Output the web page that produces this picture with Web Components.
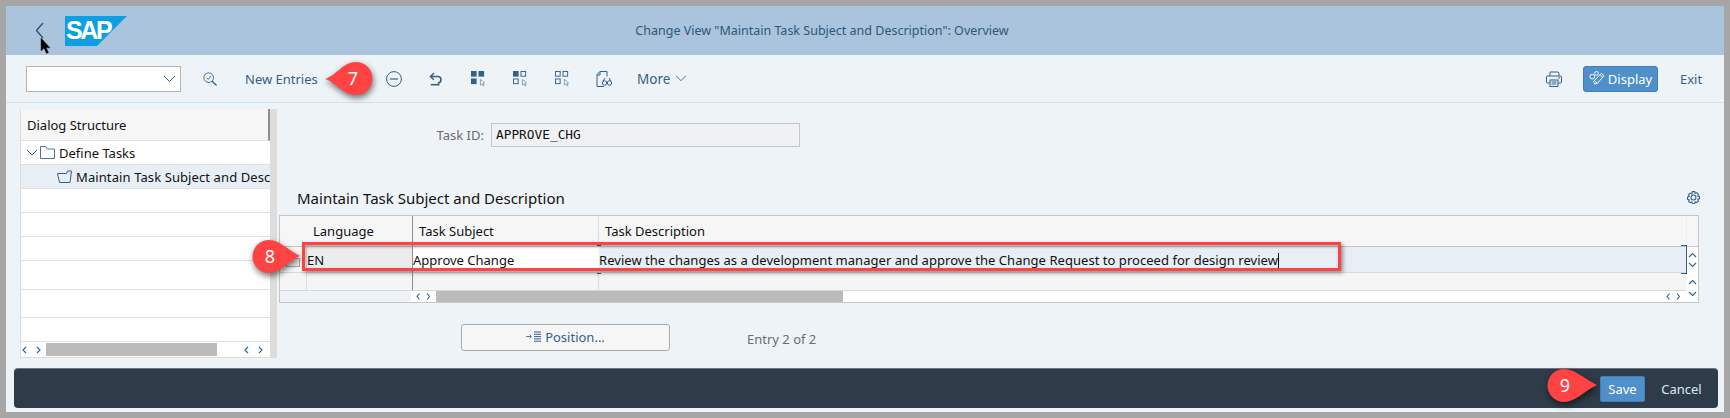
<!DOCTYPE html>
<html>
<head>
<meta charset="utf-8">
<title>Change View</title>
<style>
  html, body { margin: 0; padding: 0; background: #a6a6a6; }
  body { font-family: "Noto Sans", "Liberation Sans", sans-serif; font-size: 13px; }
</style>
</head>
<body>
<sap-shell>
  <sap-header slot="header" heading='Change View "Maintain Task Subject and Description": Overview'></sap-header>
  <sap-toolbar slot="toolbar"></sap-toolbar>
  <sap-tree slot="tree"></sap-tree>
  <sap-detail slot="detail"></sap-detail>
  <sap-footer slot="footer"></sap-footer>
  <red-frame slot="over" style="left:302px;top:242px;width:1039px;height:29px"></red-frame>
  <call-out slot="over" num="7" style="left:325px;top:61px;width:48px;height:35px"></call-out>
  <call-out slot="over" num="8" style="left:252px;top:239px;width:49px;height:35px"></call-out>
  <call-out slot="over" num="9" style="left:1547px;top:368px;width:51px;height:35px"></call-out>
</sap-shell>

<script>
const BLUE = "#346187";

// svg icons used in the toolbar, all drawn on a 16 box
const cursor = `<path d="M10 9v6l1.5-1.4L13 16l1-.6-1.4-2.3 1.9-.3z" fill="#fff" stroke="#6b86a0" stroke-width=".8"/>`;
const ICONS = {
  search: `<circle cx="6.5" cy="6.5" r="5.5" fill="none" stroke="${BLUE}" stroke-width="1"/><path d="M10.500 10.500L15.500 15.500" stroke="${BLUE}" stroke-width="1.6"/><path d="M4 6.500l2 2 3-4" fill="none" stroke="${BLUE}" stroke-width="1"/>`,
  minus: `<circle cx="8" cy="8" r="7.400" fill="none" stroke="${BLUE}" stroke-width="1"/><path d="M4 8h8" stroke="${BLUE}" stroke-width="1.2"/>`,
  undo: `<path d="M5.500 1.500L1.800 5.200l3.700 3.600" fill="none" stroke="${BLUE}" stroke-width="1.8"/><path d="M2 5.200h8a3.700 3.700 0 0 1 0 7.400" fill="none" stroke="${BLUE}" stroke-width="1.8"/><path d="M2 14.500h10" stroke="${BLUE}" stroke-width="1.8"/>`,
  selall: `<rect x="0" y="0" width="6" height="6" fill="${BLUE}"/><rect x="8" y="0" width="6" height="6" fill="${BLUE}"/><rect x="0" y="8" width="6" height="6" fill="${BLUE}"/>${cursor}`,
  selblk: `<rect x="0" y="0" width="6" height="6" fill="${BLUE}"/><rect x="8.500" y=".5" width="5" height="5" fill="none" stroke="${BLUE}"/><rect x=".5" y="8.500" width="5" height="5" fill="none" stroke="${BLUE}"/>${cursor}`,
  selnone: `<rect x=".5" y=".5" width="5" height="5" fill="none" stroke="${BLUE}"/><rect x="8.500" y=".5" width="5" height="5" fill="none" stroke="${BLUE}"/><rect x=".5" y="8.500" width="5" height="5" fill="none" stroke="${BLUE}"/>${cursor}`,
  docview: `<path d="M4 .5h7v5M4 .5L1 3.500v12h7" fill="none" stroke="${BLUE}"/><path d="M1 4h3V.5" fill="none" stroke="${BLUE}"/><circle cx="8.500" cy="12" r="2.200" fill="none" stroke="${BLUE}"/><circle cx="13.500" cy="12" r="2.200" fill="none" stroke="${BLUE}"/><path d="M10.700 11.500h.6M7 10l2-3M15 10l-2-3" fill="none" stroke="${BLUE}"/>`,
  print: `<path d="M4 5V1h8l1 1v3" fill="none" stroke="${BLUE}"/><rect x=".5" y="5" width="15" height="7" rx="1" fill="none" stroke="${BLUE}"/><rect x="4" y="9" width="8" height="6.500" fill="#eef3f8" stroke="${BLUE}"/><path d="M5.500 11h5M5.500 13h5M12 7h2" stroke="${BLUE}"/>`,
  display: `<path d="M5 11l1 3 3-1 7-8-3-2.500z" fill="none" stroke="#fff"/><path d="M9 13L6 10.500M12 4.500l3 2.500" stroke="#fff"/><circle cx="3.500" cy="6" r="2.500" fill="none" stroke="#fff"/><circle cx="8" cy="2.500" r="2" fill="none" stroke="#fff"/>`,
  chevron: `<path d="M1 1l5.500 5.500L12 1" fill="none" stroke="${BLUE}" stroke-width="1"/>`
};

function svg(name, w, h, box) {
  return `<svg width="${w}" height="${h}" viewBox="${box || "0 0 16 16"}" style="display:block;overflow:visible">${ICONS[name]}</svg>`;
}

function shadow(el, html) {
  el.attachShadow({ mode: "open" }).innerHTML = html;
}

class SapShell extends HTMLElement {
  constructor() {
    super();
    shadow(this, `<style>
      :host { display: block; position: relative; width: 1730px; height: 418px; box-sizing: border-box; padding: 6px; background: #a6a6a6; overflow: hidden; }
      .page { display: flex; flex-direction: column; height: 406px; width: 1718px; background: #eef3f8; }
      .main { display: flex; flex: 1; min-height: 0; padding-left: 14px; }
    </style>
    <div class="page">
      <slot name="header"></slot>
      <slot name="toolbar"></slot>
      <div class="main"><slot name="tree"></slot><slot name="detail"></slot></div>
      <slot name="footer"></slot>
    </div>
    <slot name="over"></slot>`);
  }
}

class SapHeader extends HTMLElement {
  constructor() {
    super();
    shadow(this, `<style>
      :host { display: flex; align-items: center; height: 49px; background: #a9c4dc; flex: none; position: relative; }
      .back { margin-left: 29px; width: 30px; flex: none; }
      .logo { position: relative; width: 62px; height: 30px; flex: none; }
      .logo svg { position: absolute; inset: 0; }
      .logo span { position: relative; display: block; padding-left: 1px; font: bold 25px/29px "Liberation Sans", sans-serif; color: #fff; letter-spacing: -2.4px; }
      h1 { flex: 1; margin: 0; padding-right: 207px; text-align: center; font-size: 12.5px; font-weight: 400; color: #2f5878; }
      .ptr { position: absolute; left: 34px; top: 32px; }
    </style>
    <div class="back"><svg width="9" height="17" viewBox="0 0 9 17" style="display:block"><path d="M8 1L1.500 8.500 8 16" fill="none" stroke="#2d5577" stroke-width="1.4"/></svg></div>
    <div class="logo"><svg width="62" height="30" viewBox="0 0 62 30"><path d="M0 0h62L32 30H0z" fill="#0d9fe2"/></svg><span>SAP</span></div>
    <h1>${this.getAttribute("heading")}</h1>
    <svg class="ptr" width="11" height="16" viewBox="0 0 11 16"><path d="M1 0v13l3-2.800L6.500 15.500 8.500 14.500 6.200 9.800H10z" fill="#000" stroke="#333" stroke-width=".5"/></svg>`);
  }
}

class SapToolbar extends HTMLElement {
  constructor() {
    super();
    shadow(this, `<style>
      :host { display: flex; align-items: center; height: 47px; flex: none; box-sizing: content-box; border-bottom: 1px solid #d3e2f1; background: #eef3f8; color: ${BLUE}; font-size: 13px; }
      .sel { margin-left: 20px; width: 155px; height: 26px; background: #fff; border: 1px solid #b5b5b5; display: flex; align-items: center; justify-content: flex-end; padding-right: 4px; box-sizing: border-box; flex: none; }
      .ic { flex: none; display: block; }
      .text { flex: none; }
      .spacer { flex: 1; }
      .btn { flex: none; display: flex; align-items: center; gap: 4px; box-sizing: border-box; width: 75px; height: 26px; justify-content: center; background: #4f8fca; border: 1px solid #3e7fbb; border-radius: 3px; color: #fff; }
    </style>
    <div class="sel">${svg("chevron", 13, 8, "0 0 13 8")}</div>
    <div class="ic" style="margin-left:22px">${svg("search", 14, 14)}</div>
    <div class="text" style="margin-left:28px;width:73px">New Entries</div>
    <div class="ic" style="margin-left:68px">${svg("minus", 16, 16)}</div>
    <div class="ic" style="margin-left:27px">${svg("undo", 14, 14)}</div>
    <div class="ic" style="margin-left:28px">${svg("selall", 15, 15)}</div>
    <div class="ic" style="margin-left:27px">${svg("selblk", 15, 15)}</div>
    <div class="ic" style="margin-left:27px">${svg("selnone", 15, 15)}</div>
    <div class="ic" style="margin-left:26px">${svg("docview", 16, 16)}</div>
    <div class="text" style="margin-left:25px;font-size:13.500px;width:33px">More</div>
    <div class="ic" style="margin-left:5px">${svg("chevron", 12, 7, "0 0 13 8")}</div>
    <div class="spacer"></div>
    <div class="ic">${svg("print", 16, 16)}</div>
    <div class="btn" style="margin-left:21px">${svg("display", 15, 15)}<span>Display</span></div>
    <div class="text" style="margin-left:22px;margin-right:23px;width:21px">Exit</div>`);
  }
}

class SapTree extends HTMLElement {
  constructor() {
    super();
    const arrows = `<svg width="22" height="8" viewBox="0 0 22 8"><path d="M5 1L2 4l3 3M16 1l3 3-3 3" fill="none" stroke="#2a6bb0" stroke-width="1.2"/></svg>`;
    shadow(this, `<style>
      :host { display: block; flex: none; width: 257px; height: 249px; margin-top: 6px; box-sizing: border-box; background: #ddd; padding-right: 7px; color: #111; }
      .box { height: 100%; background: #fff; border-left: 1px solid #ddd; box-sizing: border-box; display: flex; flex-direction: column; overflow: hidden; }
      .head { height: 32px; flex: none; background: #f6f6f6; border-bottom: 1px solid #e0e0e0; border-right: 2px solid #8f8f8f; box-sizing: border-box; padding-left: 6px; line-height: 32px; }
      .row { flex: none; height: 24px; box-sizing: border-box; border-bottom: 1px solid #e0e0e0; display: flex; align-items: center; white-space: nowrap; overflow: hidden; }
      .row.sel { background: #e8eef6; }
      .foot { margin-top: auto; height: 15px; flex: none; display: flex; align-items: center; border-bottom: 1px solid #ddd; box-sizing: content-box; }
      .thumb { width: 171px; height: 13px; background: #bbb; margin-left: 3px; }
      .foot svg { flex: none; display: block; }
      .end { margin-left: auto; margin-right: 5px; }
    </style>
    <div class="box">
      <div class="head">Dialog Structure</div>
      <div class="row">
        <svg style="margin-left:5px;flex:none" width="12" height="7" viewBox="0 0 12 7"><path d="M1 1l5 5 5-5" fill="none" stroke="${BLUE}"/></svg>
        <svg style="margin-left:2px;flex:none" width="15" height="13" viewBox="0 0 15 13"><path d="M.5 12.500V.5h5l2 2.500h7v9.500z" fill="none" stroke="#5b6f9c"/></svg>
        <span style="margin-left:4px">Define Tasks</span>
      </div>
      <div class="row sel">
        <svg style="margin-left:36px;flex:none" width="15" height="13" viewBox="0 0 15 13"><path d="M.5 3.500h9l1-2.500h4l-1.500 11.500H2.500z" fill="none" stroke="${BLUE}"/></svg>
        <span style="margin-left:4px;letter-spacing:.1px">Maintain Task Subject and Desc</span>
      </div>
      <div class="row"></div>
      <div class="row"></div>
      <div class="row"></div>
      <div class="row" style="height:29px"></div>
      <div class="row" style="height:28px"></div>
      <div class="row"></div>
      <div class="foot">
        ${arrows}
        <div class="thumb"></div>
        <div class="end">${arrows}</div>
      </div>
    </div>`);
  }
}

class SapDetail extends HTMLElement {
  constructor() {
    super();
    const up = `<path d="M1 5l3.500-3.500L8 5" fill="none" stroke="${BLUE}" stroke-width="1.2"/>`;
    const dn = `<path d="M1 1l3.500 3.500L8 1" fill="none" stroke="${BLUE}" stroke-width="1.2"/>`;
    const lr = `<svg width="15" height="7" viewBox="0 0 15 7"><path d="M3.500 .5L1 3.500l2.500 3M11 .5l2.500 3-2.500 3" fill="none" stroke="${BLUE}" stroke-width="1.100"/></svg>`;
    shadow(this, `<style>
      :host { display: flex; flex-direction: column; flex: none; width: 1420px; margin-left: 2px; color: #111; }
      .id { display: flex; align-items: center; margin-top: 20px; height: 24px; }
      .id label { width: 205px; text-align: right; color: #6a6d70; }
      .field { margin-left: 7px; width: 309px; height: 24px; box-sizing: border-box; background: #f0f1f3; border: 1px solid #c6c6c6; padding-left: 4px; font: 12.800px/22px "DejaVu Sans Mono", monospace; color: #111; }
      .title { display: flex; align-items: center; justify-content: space-between; margin-top: 37px; height: 31px; padding: 0 0 4px 18px; box-sizing: border-box; font-size: 15px; }
      .title svg { display: block; margin-right: -1px; }
      .tbl { display: grid; grid-template-columns: 27px 106px 186px 1fr 12px; grid-template-rows: 31px 26px 18px 11px; height: 88px; box-sizing: border-box; border: 1px solid #c6c6c6; }
      .tbl > div { box-sizing: border-box; }
      .hd { background: #f6f6f6; border-bottom: 1px solid #c6c6c6; padding: 0 6px; line-height: 30px; }
      .dark { border-right: 1px solid #8e8e8e; }
      .lite { border-right: 1px solid #ddd; }
      .cell { line-height: 26px; white-space: nowrap; border-bottom: 1px solid #d9d9d9; position: relative; }
      .lang { background: #ececec; }
      .subj { background: #fff; }
      .desc { background: #e8eef6; letter-spacing: .04px; }
      .caret { display: inline-block; width: 1px; height: 15px; background: #000; vertical-align: -3px; }
      .mark::after { content: ""; position: absolute; right: -1px; top: -2px; bottom: -2px; width: 5px; border: 1px solid ${BLUE}; border-left: 0; }
      .subj.mark::after { border-width: 1px 0; right: -2px; width: 4px; }
      .rowsel { background: #f6f6f6; border-bottom: 1px solid #d9d9d9; padding: 11px 0 0 6px; }
      .rowsel i { display: block; width: 14px; height: 9px; box-sizing: border-box; border: 1px solid #aaa; background: #eee; }
      .emp { background: #f6f5f6; border-bottom: 1px solid #d9d9d9; }
      .v { background: #fff; display: flex; flex-direction: column; align-items: center; justify-content: center; gap: 4px; }
      .v svg { display: block; }
      .vlow { grid-column: 5; grid-row: 3 / span 2; gap: 6px; }
      .scroll { grid-column: 1 / span 4; grid-row: 4; display: flex; align-items: stretch; height: 11px; background: #fff; }
      .blank { width: 131px; background: #eef3f8; flex: none; }
      .ar { width: 25px; display: flex; align-items: center; justify-content: center; flex: none; }
      .thumb { width: 407px; background: #bbb; flex: none; }
      .endar { margin-left: auto; }
      .pos { display: flex; align-items: center; margin-top: 21px; }
      button { margin-left: 182px; width: 209px; height: 27px; display: flex; align-items: center; justify-content: center; gap: 3px; background: #f6f6f6; border: 1px solid #aaa; border-radius: 3px; font: inherit; font-size: 13px; color: ${BLUE}; padding: 0 0 2px; }
      .entry { margin-left: 77px; margin-top: 3px; color: #6a6d70; }
    </style>
    <div class="id"><label>Task ID:</label><div class="field">APPROVE_CHG</div></div>
    <div class="title"><span>Maintain Task Subject and Description</span>
      <svg width="13" height="13" viewBox="0 0 16 16"><circle cx="8" cy="8" r="3" fill="none" stroke="${BLUE}" stroke-width="1.300"/><path d="M6.500.8h3l.5 2.200 2-1 2.200 2.200-1 2 2.200.5v3l-2.200.5 1 2-2.200 2.200-2-1-.5 2.200h-3l-.5-2.200-2 1L1.800 12.800l1-2L.6 10.300v-3l2.200-.5-1-2L4 2.600l2 1z" fill="none" stroke="${BLUE}" stroke-width="1.300"/></svg>
    </div>
    <div class="tbl">
      <div class="hd"></div>
      <div class="hd dark">Language</div>
      <div class="hd lite">Task Subject</div>
      <div class="hd">Task Description</div>
      <div class="hd" style="padding:0;border-left:1px solid #e6edf5"></div>

      <div class="rowsel lite"><i></i></div>
      <div class="cell lang dark">EN</div>
      <div class="cell subj mark">Approve Change</div>
      <div class="cell desc mark">Review the changes as a development manager and approve the Change Request to proceed for design review<span class="caret"></span></div>
      <div class="v"><svg width="9" height="6" viewBox="0 0 9 6">${up}</svg><svg width="9" height="6" viewBox="0 0 9 6">${dn}</svg></div>

      <div class="emp lite"></div>
      <div class="emp dark"></div>
      <div class="emp lite"></div>
      <div class="emp"></div>
      <div class="v vlow"><svg width="9" height="6" viewBox="0 0 9 6">${up}</svg><svg width="9" height="6" viewBox="0 0 9 6">${dn}</svg></div>

      <div class="scroll">
        <div class="blank"></div>
        <div class="ar">${lr}</div>
        <div class="thumb"></div>
        <div class="ar endar">${lr}</div>
      </div>
    </div>
    <div class="pos">
      <button><svg width="16" height="11" viewBox="0 0 16 11"><path d="M0 5.500h5M3.500 3.500l2 2-2 2" fill="none" stroke="#6a7a88"/><path d="M8 1h7M8 3.300h7M8 5.600h7M8 7.900h7M8 10.200h7" stroke="${BLUE}"/></svg><span>Position...</span></button>
      <div class="entry">Entry 2 of 2</div>
    </div>`);
  }
}

class SapFooter extends HTMLElement {
  constructor() {
    super();
    shadow(this, `<style>
      :host { display: flex; align-items: center; justify-content: flex-end; flex: none; box-sizing: border-box; height: 40px; margin: 0 6px 4px 8px; background: #2f3b48; border-top: 1px solid #6d7782; border-radius: 4px; font-size: 13px; color: #fff; }
      .save { width: 45px; height: 26px; line-height: 24px; text-align: center; box-sizing: border-box; background: #4f8fca; border: 1px solid #3e7fbb; border-radius: 2px; }
      .cancel { margin: 0 15px; width: 43px; text-align: center; color: #d8eaf8; }
    </style>
    <div class="save">Save</div><div class="cancel">Cancel</div>`);
  }
}

// red annotation frame laid over the screenshot
class RedFrame extends HTMLElement {
  constructor() {
    super();
    shadow(this, `<style>
      :host { display: block; position: absolute; box-sizing: border-box; border: 3px solid #ff4343; box-shadow: 2px 2px 4px rgba(0,0,0,.4), inset 1px 2px 3px rgba(0,0,0,.3); }
    </style>`);
  }
}

// numbered drop shaped marker pointing at a control
class CallOut extends HTMLElement {
  constructor() {
    super();
    const n = this.getAttribute("num");
    const flip = n == 7;
    const shape = flip
      ? `<svg width="48" height="35"><path d="M0 18C12 14 18 1 31 1a16.500 16.500 0 0 1 0 33C18 34 12 22 0 18z" fill="#ff4343"/></svg>`
      : `<svg width="${n == 8 ? 49 : 51}" height="35"><path d="M${n == 8 ? 48 : 50} 17C${n == 8 ? 34 : 36} 10 28 1 17 1a16.500 16.500 0 0 0 0 33C28 34 ${n == 8 ? 34 : 36} 24 ${n == 8 ? 48 : 50} 17z" fill="#ff4343"/></svg>`;
    shadow(this, `<style>
      :host { display: block; position: absolute; }
      svg { position: absolute; inset: 0; overflow: visible; filter: drop-shadow(1px 3px 3px rgba(0,0,0,.55)); }
      span { position: absolute; width: 34px; left: ${flip ? 11 : 1}px; top: 0; text-align: center; color: #fff; font: 18px/34px "Noto Sans", sans-serif; }
    </style>${shape}<span>${n}</span>`);
  }
}

customElements.define("sap-shell", SapShell);
customElements.define("sap-header", SapHeader);
customElements.define("sap-toolbar", SapToolbar);
customElements.define("sap-tree", SapTree);
customElements.define("sap-detail", SapDetail);
customElements.define("sap-footer", SapFooter);
customElements.define("red-frame", RedFrame);
customElements.define("call-out", CallOut);
</script>
</body>
</html>
